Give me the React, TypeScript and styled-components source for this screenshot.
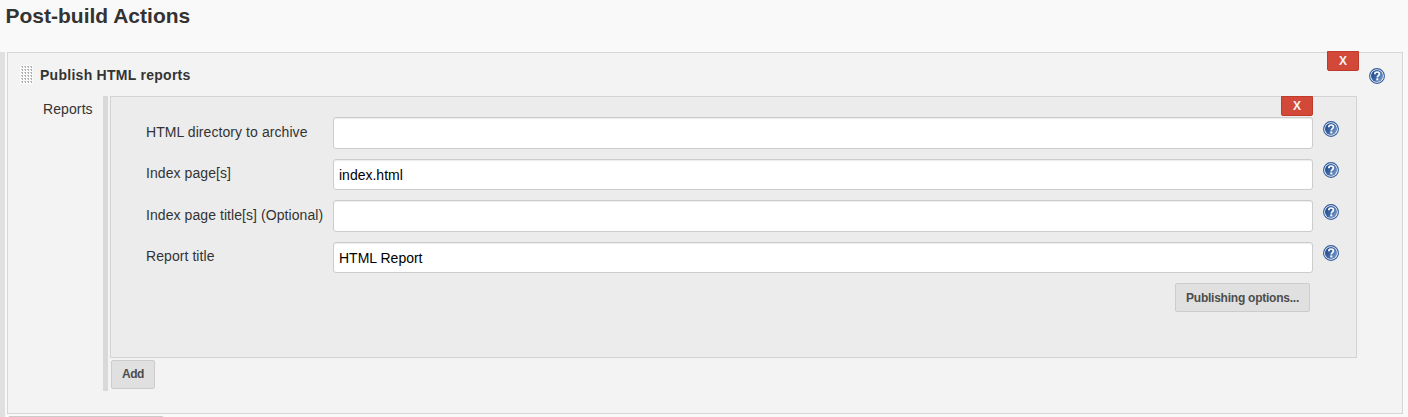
import React from "react";
import styled, { createGlobalStyle } from "styled-components";

const GlobalStyle = createGlobalStyle`
  * { box-sizing: border-box; }
  body {
    margin: 0;
    background: #f9f9f9;
    color: #333;
    font: 14px/20px "Liberation Sans", Arial, sans-serif;
    overflow: hidden;
  }
`;

const Page = styled.main`
  height: 417px;
  overflow: hidden;
`;

const PageTitle = styled.h1`
  margin: 0;
  height: 52px;
  padding: 3px 0 0 5.5px;
  font-size: 21px;
  line-height: 26px;
`;

const Chunks = styled.section`
  display: flex;
  flex-direction: column;
  gap: 2px;
  height: 400px;
  padding: 0 5px 0 2px;
  border-left: 5px solid #e0e0e0;
`;

const Panel = styled.div`
  position: relative;
  flex: none;
  height: 362px;
  border: 1px solid #d6d6d6;
  background: #f3f3f3;
`;

const PanelHeader = styled.header`
  display: flex;
  align-items: flex-start;
  height: 43px;
  padding: 12px 17px 0 12px;
`;

const PanelTitle = styled.h2`
  flex: 1;
  margin: 0 0 0 7px;
  font-size: 14px;
  line-height: 20px;
  letter-spacing: 0.27px;
`;

const HeaderHelp = styled.div`
  padding-top: 3px;
`;

const PanelBody = styled.div`
  display: flex;
  padding-left: 35px;
`;

const BodyLabel = styled.div`
  width: 60px;
  padding-top: 3px;
  letter-spacing: 0.1px;
`;

const Repeatable = styled.div`
  width: 1254px;
  height: 295px;
  padding-left: 2px;
  border-left: 5px solid #d9d9d9;
`;

const ReportCard = styled.div`
  position: relative;
  height: 262px;
  padding: 20px 0 0 35px;
  border: 1px solid #d3d3d3;
  background: #ececec;
`;

const DeleteButton = styled.button<{ $top: number; $right: number }>`
  position: absolute;
  top: ${(p) => p.$top}px;
  right: ${(p) => p.$right}px;
  width: 32px;
  height: 20px;
  padding: 0;
  border: 1px solid #c03a2b;
  border-radius: 0 0 2px 2px;
  background: #d24939;
  color: #f3f3f3;
  font: bold 12px/18px "Liberation Sans", Arial, sans-serif;
`;

const Field = styled.div<{ $tall?: boolean }>`
  display: grid;
  grid-template-columns: 187px 980px auto;
  justify-content: start;
  height: ${(p) => (p.$tall ? 32 : 31)}px;
  margin-bottom: 10px;
`;

const FieldLabel = styled.label<{ $tall?: boolean }>`
  padding-top: ${(p) => (p.$tall ? 5 : 4)}px;
  letter-spacing: 0.07px;
  white-space: nowrap;
`;

const TextInput = styled.input`
  width: 980px;
  height: 100%;
  padding: 0 5px;
  border: 1px solid #ccc;
  border-radius: 3px;
  background: #fff;
  box-shadow: inset 0 1px 1px rgba(0, 0, 0, 0.075);
  color: #000;
  font: 14px "Liberation Sans", Arial, sans-serif;
  outline: 0;
`;

const FieldHelp = styled.div<{ $tall?: boolean }>`
  padding: ${(p) => (p.$tall ? 4 : 3)}px 0 0 10px;
`;

const Actions = styled.div`
  display: flex;
  justify-content: flex-end;
  padding-right: 46px;
`;

const Button = styled.button<{ $raised?: boolean }>`
  display: block;
  height: 29px;
  padding: ${(p) => (p.$raised ? "0 10px" : "2px 10px 0")};
  border: 1px solid #ccc;
  border-radius: 2px;
  background: #e0e0e0;
  color: #4d4d4d;
  font: bold 12px/25px "Liberation Sans", Arial, sans-serif;
  letter-spacing: ${(p) => (p.$raised ? -0.45 : -0.24)}px;
  white-space: nowrap;
`;

const AddRow = styled.div`
  padding: 2px 0 0 1px;
`;

const NextButton = styled.div`
  flex: none;
  width: 156px;
  height: 29px;
  margin-left: 1px;
  border: 1px solid #ccc;
  border-radius: 2px;
  background: #e0e0e0;
`;

const Icon = styled.svg`
  display: block;
  flex: none;
`;

function DragHandle() {
  return (
    <Icon width="13" height="19" viewBox="0 0 13 19">
      <defs>
        <pattern id="grip" width="3" height="3" patternUnits="userSpaceOnUse">
          <rect width="3" height="3" fill="#fafafa" />
          <rect x="1" y="1" width="2" height="1" fill="#c6c6c6" />
          <rect x="2" y="1" width="1" height="2" fill="#b0b0b0" />
        </pattern>
      </defs>
      <rect width="13" height="19" fill="#fafafa" />
      <rect width="12" height="18" fill="url(#grip)" />
    </Icon>
  );
}

function HelpIcon() {
  return (
    <Icon width="16" height="16" viewBox="0 0 16 16">
      <defs>
        <linearGradient id="help-fill" x1="0" y1="0.2" x2="1" y2="0.8">
          <stop offset="0" stopColor="#1f4888" />
          <stop offset="0.5" stopColor="#3e68a5" />
          <stop offset="1" stopColor="#7f9fca" />
        </linearGradient>
      </defs>
      <circle cx="8" cy="8" r="7.4" fill="#f4f7fb" stroke="#315c9c" strokeWidth="1.1" />
      <circle cx="8" cy="8" r="6" fill="url(#help-fill)" />
      <path
        d="M5.8 6.2C5.8 4.7 6.7 4 8.1 4s2.3.8 2.3 2c0 1.7-2.1 1.7-2.1 3.4"
        fill="none"
        stroke="#fff"
        strokeWidth="1.7"
      />
      <rect x="7.3" y="10.4" width="2" height="2" fill="#fff" />
    </Icon>
  );
}

const fields = [
  { id: "dir", label: "HTML directory to archive", value: "", tall: true },
  { id: "index", label: "Index page[s]", value: "index.html", tall: false },
  { id: "titles", label: "Index page title[s] (Optional)", value: "", tall: true },
  { id: "title", label: "Report title", value: "HTML Report", tall: false },
];

export default function App() {
  return (
    <Page>
      <GlobalStyle />
      <PageTitle>Post-build Actions</PageTitle>
      <Chunks>
        <Panel>
          <DeleteButton $top={-2} $right={43}>X</DeleteButton>
          <PanelHeader>
            <DragHandle />
            <PanelTitle>Publish HTML reports</PanelTitle>
            <HeaderHelp>
              <HelpIcon />
            </HeaderHelp>
          </PanelHeader>
          <PanelBody>
            <BodyLabel>Reports</BodyLabel>
            <Repeatable>
              <ReportCard>
                <DeleteButton $top={-1} $right={43}>X</DeleteButton>
                {fields.map((f) => (
                  <Field key={f.id} $tall={f.tall}>
                    <FieldLabel htmlFor={f.id} $tall={f.tall}>{f.label}</FieldLabel>
                    <TextInput id={f.id} defaultValue={f.value} />
                    <FieldHelp $tall={f.tall}>
                      <HelpIcon />
                    </FieldHelp>
                  </Field>
                ))}
                <Actions>
                  <Button>Publishing options...</Button>
                </Actions>
              </ReportCard>
              <AddRow>
                <Button $raised>Add</Button>
              </AddRow>
            </Repeatable>
          </PanelBody>
        </Panel>
        <NextButton />
      </Chunks>
    </Page>
  );
}
